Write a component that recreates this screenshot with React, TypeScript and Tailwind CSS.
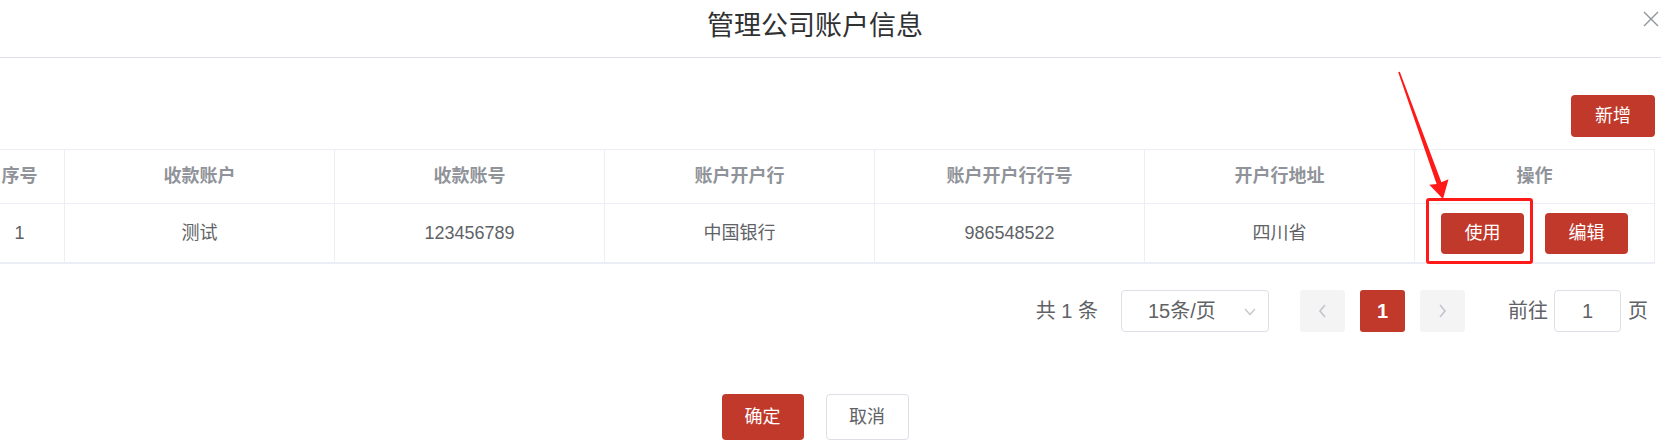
import React from "react";

function HeaderCell({ w, children, last }: { w: string; children: React.ReactNode; last?: boolean }) {
  return (
    <div className={`${w} shrink-0 h-full flex items-center justify-center ${last ? "" : "border-r border-[#ebeef5]"} text-[18px] font-bold text-[#909399]`}>
      {children}
    </div>
  );
}

function BodyCell({ w, children, last }: { w: string; children: React.ReactNode; last?: boolean }) {
  return (
    <div className={`${w} shrink-0 h-full flex items-center justify-center ${last ? "" : "border-r border-[#ebeef5]"} text-[18px] text-[#606266]`}>
      {children}
    </div>
  );
}

export default function App() {
  return (
    <div className="relative w-[1661px] h-[448px] overflow-hidden bg-white font-['Liberation_Sans','Noto_Sans_CJK_SC',sans-serif]">
      <div className="relative -ml-[45px] w-[1720px]">
        {/* Header */}
        <div className="h-[58px] border-b border-[#dcdfe6] pt-[12px] text-center text-[27px] leading-[28px] text-[#303133]">
          管理公司账户信息
        </div>
        <button className="absolute right-[16px] top-[11px] w-[16px] h-[16px] flex items-center justify-center">
          <svg width="16" height="16" viewBox="0 0 16 16">
            <path d="M1 1 L15 15 M15 1 L1 15" stroke="#909399" strokeWidth="1.4" fill="none" />
          </svg>
        </button>

        {/* Body */}
        <div className="px-[20px]">
          <div className="flex justify-end pt-[37px]">
            <button className="w-[84px] h-[42px] rounded-[4px] bg-[#c0392b] text-white text-[18px] flex items-center justify-center">
              新增
            </button>
          </div>

          {/* Table */}
          <div className="mt-[12px] w-[1680px] border-t border-r border-[#ebeef5]">
            <div className="flex h-[54px] border-b border-[#ebeef5]">
              <HeaderCell w="w-[90px]">序号</HeaderCell>
              <HeaderCell w="w-[270px]">收款账户</HeaderCell>
              <HeaderCell w="w-[270px]">收款账号</HeaderCell>
              <HeaderCell w="w-[270px]">账户开户行</HeaderCell>
              <HeaderCell w="w-[270px]">账户开户行行号</HeaderCell>
              <HeaderCell w="w-[270px]">开户行地址</HeaderCell>
              <HeaderCell w="w-[239px]" last>操作</HeaderCell>
            </div>
            <div className="flex h-[60px] border-b-2 border-[#ebeef5]">
              <BodyCell w="w-[90px]">1</BodyCell>
              <BodyCell w="w-[270px]">测试</BodyCell>
              <BodyCell w="w-[270px]">123456789</BodyCell>
              <BodyCell w="w-[270px]">中国银行</BodyCell>
              <BodyCell w="w-[270px]">986548522</BodyCell>
              <BodyCell w="w-[270px]">四川省</BodyCell>
              <div className="w-[239px] shrink-0 h-full flex items-center justify-center gap-[21px] pt-[1px]">
                <button className="w-[83px] h-[41px] rounded-[4px] bg-[#c0392b] text-white text-[18px] flex items-center justify-center">
                  使用
                </button>
                <button className="w-[83px] h-[41px] rounded-[4px] bg-[#c0392b] text-white text-[18px] flex items-center justify-center">
                  编辑
                </button>
              </div>
            </div>
          </div>

          {/* Pagination */}
          <div className="mt-[26px] flex justify-end items-center h-[42px] pr-[7px] text-[20px] text-[#606266]">
            <span className="mr-[23px] whitespace-pre">共 1 条</span>
            <div className="relative w-[148px] h-[42px] rounded-[4px] border border-[#dcdfe6] flex items-center pl-[26px]">
              <span>15条/页</span>
              <svg className="absolute right-[12px] top-[17px]" width="12" height="8" viewBox="0 0 12 8">
                <path d="M1 1 L6 6.5 L11 1" stroke="#c0c4cc" strokeWidth="1.2" fill="none" />
              </svg>
            </div>
            <div className="ml-[31px] w-[45px] h-[42px] rounded-[3px] bg-[#f4f4f5] flex items-center justify-center">
              <svg width="9" height="14" viewBox="0 0 9 14">
                <path d="M7 1 L2 7 L7 13" stroke="#c0c4cc" strokeWidth="1.6" fill="none" />
              </svg>
            </div>
            <div className="ml-[15px] w-[45px] h-[42px] rounded-[3px] bg-[#c0392b] text-white font-bold flex items-center justify-center">
              1
            </div>
            <div className="ml-[15px] w-[45px] h-[42px] rounded-[3px] bg-[#f4f4f5] flex items-center justify-center">
              <svg width="9" height="14" viewBox="0 0 9 14">
                <path d="M2 1 L7 7 L2 13" stroke="#c0c4cc" strokeWidth="1.6" fill="none" />
              </svg>
            </div>
            <span className="ml-[43px]">前往</span>
            <div className="ml-[6px] w-[67px] h-[42px] rounded-[4px] border border-[#dcdfe6] flex items-center justify-center">
              1
            </div>
            <span className="ml-[7px]">页</span>
          </div>

          {/* Footer */}
          <div className="mt-[62px] flex justify-center gap-[22px]">
            <button className="w-[82px] h-[46px] rounded-[4px] bg-[#c0392b] text-white text-[18px] flex items-center justify-center">
              确定
            </button>
            <button className="w-[83px] h-[46px] rounded-[4px] border border-[#dcdfe6] bg-white text-[#606266] text-[18px] flex items-center justify-center">
              取消
            </button>
          </div>
        </div>
      </div>

      {/* Annotation: red box */}
      <div className="absolute left-[1426px] top-[198px] w-[107px] h-[66px] border-[3px] border-[#ff1a1a] rounded-[3px] pointer-events-none" />

      {/* Annotation: arrow */}
      <svg className="absolute left-0 top-0 pointer-events-none" width="1661" height="448" viewBox="0 0 1661 448">
        <polygon
          points="1399.8,71.7 1441.4,182.2 1448.5,179.2 1443,199 1429.3,184.8 1436.6,184 1398.2,72.3"
          fill="#ff1a1a"
        />
      </svg>
    </div>
  );
}
